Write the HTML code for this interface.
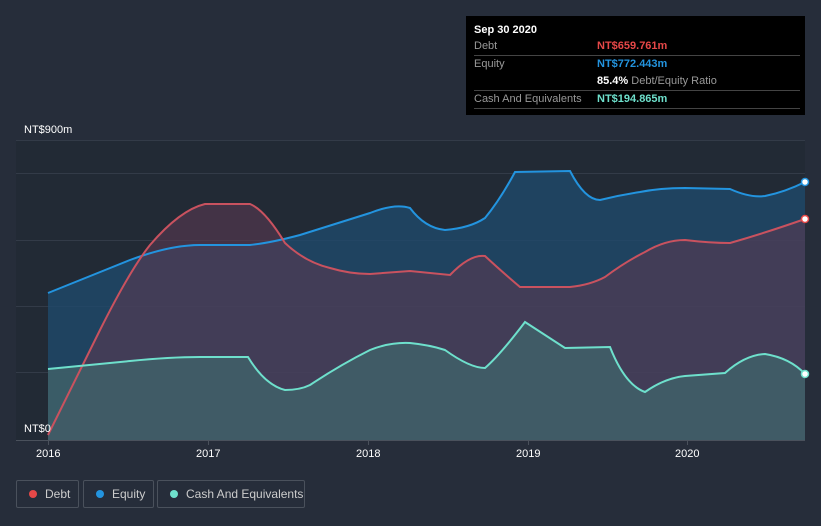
<!DOCTYPE html>
<html><head><style>
body{margin:0;width:821px;height:526px;background:#262d3a;font-family:"Liberation Sans",sans-serif;overflow:hidden;position:relative}
.tt{position:absolute;left:466px;top:16px;width:339px;height:99px;background:#000}
.tt .r{position:absolute;left:8px;width:326px;border-bottom:1px solid #444;font-size:11px;height:17px;line-height:17px}
.l{color:#999}
.leg{position:absolute;top:480px;height:26px;border:1px solid #4a515c;border-radius:2px;color:#ccc;font-size:12px;line-height:26px}
.leg i{position:absolute;left:12px;top:9px;width:8px;height:8px;border-radius:50%}
</style></head><body>
<svg width="821" height="526" style="position:absolute;left:0;top:0">
<rect x="16" y="140" width="789" height="300" fill="#222a35"/>
<g stroke="#333b48" stroke-width="1">
<line x1="16" y1="140.5" x2="805" y2="140.5"/><line x1="16" y1="173.5" x2="805" y2="173.5"/><line x1="16" y1="240.5" x2="805" y2="240.5"/><line x1="16" y1="306.5" x2="805" y2="306.5"/><line x1="16" y1="372.5" x2="805" y2="372.5"/>
</g>
<path d="M48,293 L130,260 Q170,245 200,245 L250,245 Q270,243 300,235 L370,213 Q395,203 410,208 Q425,228 445,230 Q470,228 485,218 Q500,200 515,172 L570,171 Q585,200 600,200 Q620,195 640,192 Q660,188 685,188 L730,189 Q750,198 765,196 Q785,192 805,182 L805,440 L48,440Z" fill="#1f4a6b" fill-opacity="0.8"/>
<path d="M48,435 L100,330 Q130,270 150,245 Q180,210 205,204 L250,204 Q265,210 285,243 Q305,262 330,268 Q350,274 370,274 L410,271 L450,275 Q470,254 485,256 Q500,270 520,287 L570,287 Q590,285 605,277 Q625,262 645,252 Q665,240 685,240 Q710,243 730,243 Q765,233 805,219 L805,440 L48,440Z" fill="#5a3a52" fill-opacity="0.6"/>
<path d="M48,369 L130,361 Q170,357 200,357 L248,357 Q265,385 285,390 Q300,390 310,385 Q340,365 370,350 Q390,342 410,343 Q430,345 445,350 Q470,368 485,368 Q500,355 525,322 Q545,335 565,348 L610,347 Q625,385 645,392 Q665,378 685,376 L725,373 Q745,355 765,354 Q790,358 805,374 L805,440 L48,440Z" fill="#3f6068" fill-opacity="0.85"/>
<path d="M48,293 L130,260 Q170,245 200,245 L250,245 Q270,243 300,235 L370,213 Q395,203 410,208 Q425,228 445,230 Q470,228 485,218 Q500,200 515,172 L570,171 Q585,200 600,200 Q620,195 640,192 Q660,188 685,188 L730,189 Q750,198 765,196 Q785,192 805,182" fill="none" stroke="#2394df" stroke-width="2"/>
<path d="M48,435 L100,330 Q130,270 150,245 Q180,210 205,204 L250,204 Q265,210 285,243 Q305,262 330,268 Q350,274 370,274 L410,271 L450,275 Q470,254 485,256 Q500,270 520,287 L570,287 Q590,285 605,277 Q625,262 645,252 Q665,240 685,240 Q710,243 730,243 Q765,233 805,219" fill="none" stroke="#c9525f" stroke-width="2"/>
<path d="M48,369 L130,361 Q170,357 200,357 L248,357 Q265,385 285,390 Q300,390 310,385 Q340,365 370,350 Q390,342 410,343 Q430,345 445,350 Q470,368 485,368 Q500,355 525,322 Q545,335 565,348 L610,347 Q625,385 645,392 Q665,378 685,376 L725,373 Q745,355 765,354 Q790,358 805,374" fill="none" stroke="#6ee0cc" stroke-width="2"/>
<line x1="16" y1="440.5" x2="805" y2="440.5" stroke="#4a515c"/>
<g stroke="#4a515c"><line x1="48.5" y1="440" x2="48.5" y2="445"/><line x1="208.5" y1="440" x2="208.5" y2="445"/><line x1="368.5" y1="440" x2="368.5" y2="445"/><line x1="528.5" y1="440" x2="528.5" y2="445"/><line x1="687.5" y1="440" x2="687.5" y2="445"/></g>
<circle cx="805" cy="182" r="3.5" fill="#fff" stroke="#2394df" stroke-width="1.5"/>
<circle cx="805" cy="219" r="3.5" fill="#fff" stroke="#e64848" stroke-width="1.5"/>
<circle cx="805" cy="374" r="3.5" fill="#fff" stroke="#6ee0cc" stroke-width="1.5"/>
<g fill="#fff" font-size="11" font-family="Liberation Sans">
<text x="24" y="133">NT$900m</text><text x="24" y="432">NT$0</text>
<text x="36" y="457">2016</text><text x="196" y="457">2017</text><text x="356" y="457">2018</text><text x="516" y="457">2019</text><text x="675" y="457">2020</text>
</g>
</svg>
<div class="tt">
<div style="position:absolute;left:8px;top:8px;color:#fff;font-weight:bold;font-size:11px">Sep 30 2020</div>
<div class="r" style="top:22px"><span class="l">Debt</span><span style="position:absolute;left:123px;color:#e64848;font-weight:bold">NT$659.761m</span></div>
<div class="r" style="top:40px;height:34px"><span class="l">Equity</span><span style="position:absolute;left:123px;color:#2394df;font-weight:bold">NT$772.443m</span><span style="position:absolute;left:123px;top:17px;color:#fff"><b>85.4%</b> <span class="l">Debt/Equity Ratio</span></span></div>
<div class="r" style="top:75px"><span class="l">Cash And Equivalents</span><span style="position:absolute;left:123px;color:#6ee0cc;font-weight:bold">NT$194.865m</span></div>
</div>
<div class="leg" style="left:16px;width:61px"><i style="background:#e64848"></i><span style="position:absolute;left:28px">Debt</span></div>
<div class="leg" style="left:83px;width:69px"><i style="background:#2394df"></i><span style="position:absolute;left:28px">Equity</span></div>
<div class="leg" style="left:157px;width:146px"><i style="background:#6ee0cc"></i><span style="position:absolute;left:28px">Cash And Equivalents</span></div>
</body></html>
